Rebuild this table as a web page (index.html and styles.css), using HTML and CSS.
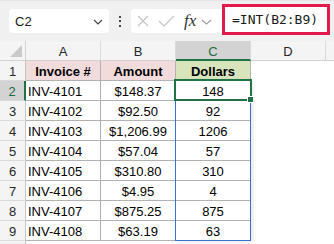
FILE: index.html
```html
<!DOCTYPE html>
<html>
<head>
<meta charset="utf-8">
<link rel="stylesheet" href="styles.css">
</head>
<body>
<div class="toolbar">
  <div class="namebox">
    <span class="ref">C2</span>
    <svg class="chev" width="10" height="6" viewBox="0 0 10 6"><path d="M1 1 L5 5 L9 1" fill="none" stroke="#444" stroke-width="1.2"/></svg>
  </div>
  <div class="dots"><i></i><i></i><i></i></div>
  <div class="fxbox">
    <svg class="ico-x" width="12" height="12" viewBox="0 0 12 12"><path d="M1 1 L11 11 M11 1 L1 11" stroke="#c4c4c4" stroke-width="1.2" fill="none"/></svg>
    <svg class="ico-ok" width="17" height="12" viewBox="0 0 17 12"><path d="M1 6 L6 11 L16 1" stroke="#c4c4c4" stroke-width="1.2" fill="none"/></svg>
    <span class="fx">fx</span>
    <svg class="chev2" width="11" height="6" viewBox="0 0 11 6"><path d="M1 1 L5.5 5 L10 1" fill="none" stroke="#9a9a9a" stroke-width="1.1"/></svg>
  </div>
  <div class="formula">=INT(B2:B9)</div>
</div>
<div class="sheet">
  <div class="hd corner"><svg width="26" height="19" viewBox="0 0 26 19"><polygon points="10,16 22,16 22,4" fill="#c9c9c9"/></svg></div>
  <div class="hd">A</div>
  <div class="hd">B</div>
  <div class="hd sel">C</div>
  <div class="hd">D</div>
  <div class="hd last"></div>

  <div class="rh">1</div>
  <div class="c th pink">Invoice #</div>
  <div class="c th pink">Amount</div>
  <div class="c th green">Dollars</div>
  <div class="e"></div><div class="e"></div>

  <div class="rh rsel">2</div>
  <div class="c l">INV-4101</div>
  <div class="c">$148.37</div>
  <div class="c cur">148<span class="spill"></span><span class="active"><span class="handle"></span></span></div>
  <div class="e"></div><div class="e"></div>

  <div class="rh">3</div>
  <div class="c l">INV-4102</div>
  <div class="c">$92.50</div>
  <div class="c">92</div>
  <div class="e"></div><div class="e"></div>

  <div class="rh">4</div>
  <div class="c l">INV-4103</div>
  <div class="c">$1,206.99</div>
  <div class="c">1206</div>
  <div class="e"></div><div class="e"></div>

  <div class="rh">5</div>
  <div class="c l">INV-4104</div>
  <div class="c">$57.04</div>
  <div class="c">57</div>
  <div class="e"></div><div class="e"></div>

  <div class="rh">6</div>
  <div class="c l">INV-4105</div>
  <div class="c">$310.80</div>
  <div class="c">310</div>
  <div class="e"></div><div class="e"></div>

  <div class="rh">7</div>
  <div class="c l">INV-4106</div>
  <div class="c">$4.95</div>
  <div class="c">4</div>
  <div class="e"></div><div class="e"></div>

  <div class="rh">8</div>
  <div class="c l">INV-4107</div>
  <div class="c">$875.25</div>
  <div class="c">875</div>
  <div class="e"></div><div class="e"></div>

  <div class="rh">9</div>
  <div class="c l">INV-4108</div>
  <div class="c">$63.19</div>
  <div class="c">63</div>
  <div class="e"></div><div class="e"></div>

  <div class="rh"></div>
  <div class="e"></div><div class="e"></div><div class="e"></div><div class="e"></div><div class="e"></div>
</div>
</body>
</html>
```

FILE: styles.css
```css
* { box-sizing: border-box; }
html, body { margin: 0; padding: 0; background: #fff; overflow: hidden; }
body { width: 334px; height: 244px; font-family: "Liberation Sans", Arial, sans-serif; }

.toolbar {
  display: flex;
  align-items: flex-start;
  height: 41px;
  background: #f0f0f0;
  border-top: 1px solid #e4e4e4;
}
.namebox {
  display: flex;
  align-items: center;
  justify-content: space-between;
  margin: 8px 0 0 9px;
  width: 100px;
  height: 24px;
  background: #fff;
  border-radius: 4px;
  padding: 0 6px 0 6px;
}
.ref { font-size: 13px; line-height: 24px; color: #1a1a1a; padding-top: 1px; }
.chev { margin-top: 2px; }
.dots {
  width: 22px;
  height: 24px;
  margin-top: 8px;
  display: flex;
  flex-direction: column;
  align-items: center;
  justify-content: center;
  gap: 2.5px;
}
.dots i { display: block; width: 2px; height: 2px; background: #444; }
.fxbox {
  display: flex;
  align-items: center;
  margin-top: 8px;
  width: 91px;
  height: 24px;
  background: #fff;
  border-radius: 4px 0 0 4px;
  padding-left: 6px;
}
.ico-ok { margin-left: 9px; }
.fx {
  margin-left: 9px;
  font-family: "Liberation Serif", "Times New Roman", serif;
  font-style: italic;
  font-size: 17px;
  line-height: 24px;
  color: #333;
}
.chev2 { margin-left: 5px; margin-top: 2px; }
.formula {
  margin-top: 3px;
  width: 108px;
  height: 31px;
  border: 3px solid #e31b4d;
  background: #fff;
  padding: 1px 0 0 7px;
  font-family: "DejaVu Sans Mono", "Liberation Mono", monospace;
  font-size: 13px;
  line-height: 24px;
  color: #1a1a1a;
  white-space: nowrap;
}

.sheet {
  display: grid;
  grid-template-columns: 26px 75px 75px 75px 75px 1fr;
  grid-auto-rows: 20px;
  font-size: 13px;
}
.sheet > div {
  padding-top: 2px;
  line-height: 17px;
  text-align: center;
  white-space: nowrap;
}
.hd {
  background: #f4f4f4;
  border-right: 1px solid #dadada;
  border-bottom: 1px solid #d2d2d2;
  color: #262626;
}
.hd.last { border-right: none; }
.sheet > .hd.corner { padding-top: 0; border-right-color: #d2d2d2; }
.hd.corner svg { display: block; }
.hd.sel {
  background: #d3d3d3;
  color: #1e6b40;
  border-bottom: 2px solid #217346;
}
.rh {
  background: #f4f4f4;
  border-right: 1px solid #c4c4c4;
  border-bottom: 1px solid #dadada;
  color: #262626;
}
.rh.rsel {
  background: #d3d3d3;
  color: #1e6b40;
  border-right: 2px solid #217346;
}
.c {
  border-right: 1px solid #b2b2b2;
  border-bottom: 1px solid #b2b2b2;
  color: #000;
}
.sheet > .c.l { text-align: left; padding-left: 2px; }
.th { font-weight: bold; }
.pink { background: #f2dcdb; }
.green { background: #d8e4bc; }

.cur { position: relative; z-index: 2; }
.spill {
  position: absolute;
  left: -1px;
  top: -1px;
  width: 76px;
  height: 161px;
  border: 1px solid #3c6fd0;
  box-shadow: 2px 1px 4px rgba(0, 0, 0, 0.10);
  pointer-events: none;
}
.active {
  position: absolute;
  left: -2px;
  top: -2px;
  right: -2px;
  bottom: -1px;
  border: 2px solid #217346;
  pointer-events: none;
}
.handle {
  position: absolute;
  right: -4px;
  bottom: -4px;
  width: 7px;
  height: 7px;
  background: #217346;
  border: 1px solid #fff;
}
```
